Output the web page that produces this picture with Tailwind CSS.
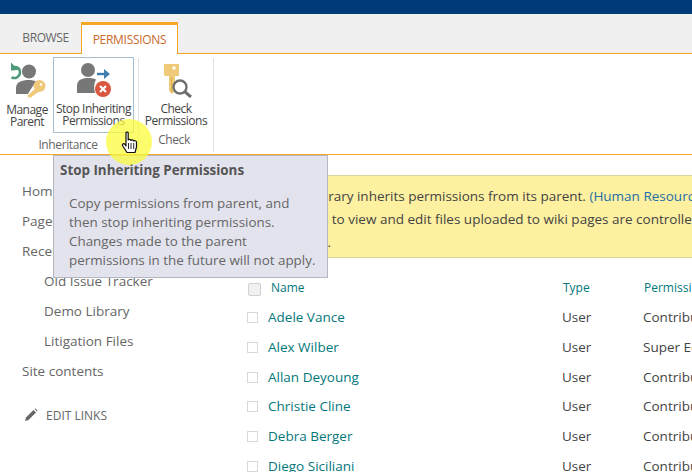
<!DOCTYPE html>
<html lang="en">
<head>
<meta charset="UTF-8">
<title>Permissions</title>
<script src="https://cdn.jsdelivr.net/npm/@tailwindcss/browser@4"></script>
</head>
<body class="w-[692px] h-[472px] overflow-hidden bg-white font-['Open_Sans','Noto_Sans',sans-serif] text-[#444]">
<!-- suite bar -->
<div class="h-[14px] bg-[#003a78]"></div>

<!-- tabs -->
<div class="h-[40px] bg-[#f0f0f0] border-b border-[#f5a623] flex items-end pl-[10px]">
  <div class="w-[71px] h-[31px] flex items-center justify-center text-[12px] tracking-[-0.4px] text-[#666] pt-[1px]">BROWSE</div>
  <div class="w-[97px] h-[32px] -mb-px bg-white border-x border-[#f5a623] border-t-[3px] flex items-center justify-center text-[12px] tracking-[-0.3px] text-[#c9682a]">PERMISSIONS</div>
</div>

<!-- ribbon -->
<div class="h-[101px] border-b border-[#f5a623] flex text-[12px] leading-[12px] tracking-[-0.5px] text-[#444]">
  <div class="w-[139px] border-r border-[#e1e1e1] flex flex-col mt-[4px] mb-[2px]">
    <div class="flex h-[75px] pl-[1px]">
      <div class="w-[52px] flex flex-col items-center">
        <svg width="40" height="38" viewBox="7 62 40 38" class="mt-[3px]">
          <path d="M11 63.500 L11 71.500 L18.500 71 Z" fill="#4f9a78"/>
          <path d="M14 68 C18.500 67.500 20.500 71 20 74 C19.500 78 15.500 80 11.500 78.500" stroke="#4f9a78" stroke-width="2.600" fill="none"/>
          <circle cx="29" cy="72.500" r="7" fill="#777"/>
          <path d="M16 95 L16 89 C16 83 22 81 29 81 C32 81 34 81.500 36 82.500 C33 87 30 91 28 95 Z" fill="#777"/>
          <circle cx="39.500" cy="87" r="6" fill="#efc979"/>
          <path d="M36 89 L27 97 L30 99 L41 91 Z" fill="#efc979"/>
          <circle cx="41" cy="85.500" r="1.300" fill="#fff"/>
        </svg>
        <div class="text-center mt-[5px]">Manage<br>Parent</div>
      </div>
      <div class="w-[81px] h-[76px] -mt-px border border-[#a5bdd1] flex flex-col items-center">
        <svg width="38" height="38" viewBox="75 61 38 38" class="mt-[2px]">
          <circle cx="88" cy="71" r="7" fill="#777"/>
          <path d="M77 94 L77 87 C77 81 82 79 88 79 C91 79 94 79.500 96 80.500 C94 84 93.500 89 95 94 Z" fill="#777"/>
          <path d="M97 75 H105" stroke="#3f7fb0" stroke-width="2.400"/>
          <path d="M104 70 L110 75 L104 80 Z" fill="#3f7fb0"/>
          <circle cx="103" cy="90" r="8" fill="#d9573f"/>
          <path d="M100 87 L106 93 M106 87 L100 93" stroke="#fff" stroke-width="2.200"/>
        </svg>
        <div class="text-center mt-[5px]">Stop Inheriting<br>Permissions</div>
      </div>
    </div>
    <div class="text-center text-[#666] mt-[6px] pr-[2px] tracking-[-0.4px]">Inheritance</div>
  </div>
  <div class="w-[75px] border-r border-[#e1e1e1] flex flex-col items-center mt-[4px] mb-[2px]">
    <svg width="36" height="38" viewBox="160 61 36 38" class="mt-[2px]">
      <path d="M166 65 H181 V77 H177 V92 L174 95 L171 92 V77 H168 C166.500 77 166 76 166 75 Z" fill="#efcb79"/>
      <circle cx="176" cy="69" r="1.700" fill="#fff"/>
      <path d="M173.500 78 V93" stroke="#dfb04a" stroke-width="1.200"/>
      <circle cx="182" cy="88" r="6.500" fill="#fff" fill-opacity="0.75" stroke="#6f6f6f" stroke-width="2.400"/>
      <path d="M186.500 92.500 L193 98" stroke="#6f6f6f" stroke-width="3"/>
    </svg>
    <div class="text-center mt-[5px]">Check<br>Permissions</div>
    <div class="text-[#666] mt-[7px] pr-[4px] tracking-[-0.4px]">Check</div>
  </div>
</div>

<!-- body -->
<div class="flex">
  <nav class="w-[247px] shrink-0 pl-[22px] pt-[27px] text-[13.5px] leading-[18px] text-[#666]">
    <div class="h-[30px]">Home</div>
    <div class="h-[30px]">Pages</div>
    <div class="h-[30px]">Recent</div>
    <div class="pl-[22px]">
      <div class="h-[30px]">Old Issue Tracker</div>
      <div class="h-[30px]">Demo Library</div>
      <div class="h-[30px]">Litigation Files</div>
    </div>
    <div class="h-[30px]">Site contents</div>
    <div class="flex items-center mt-[15px] text-[12px]">
      <svg width="14" height="14" viewBox="0 0 14 14" class="mt-[-3px] ml-[2px] mr-[8px]">
        <path d="M1 13 L2 9.500 L9.500 2 L12 4.500 L4.500 12 Z" fill="#666"/>
        <path d="M10.500 1 L11.500 0.500 L13.500 2.500 L13 3.500 Z" fill="#666"/>
      </svg>
      EDIT LINKS
    </div>
  </nav>

  <main class="flex-1 min-w-0 overflow-hidden">
    <div class="mt-[20px] h-[83px] bg-[#fdf0a0] border-y border-[#d9d79c] pt-[9px] text-[13.5px] leading-[23px] text-[#444] whitespace-nowrap">
      <div class="pl-[37px]">This library inherits permissions from its parent. <span class="text-[#1f6fa8]">(Human Resources)</span></div>
      <div class="pl-[5px]">Permissions to view and edit files uploaded to wiki pages are controlled by</div>
      <div class="pl-[16px]">the library.</div>
    </div>

    <div class="mt-[19px] whitespace-nowrap">
      <div class="flex items-center h-[22px] text-[12px] text-[#03787c]">
        <span class="w-[13px] h-[13px] shrink-0 ml-[1px] mt-[2px] rounded-[2px] border border-[#d0d0d0] bg-[#f1f1f1]"></span>
        <span class="w-[302px] shrink-0 pl-[10px]">Name</span>
        <span class="w-[81px] shrink-0">Type</span>
        <span>Permissions</span>
      </div>
      <div class="flex items-center h-[30px] mt-[3px] text-[13.5px]">
        <span class="w-[11px] h-[11px] shrink-0 border border-[#d9d9d9]"></span>
        <span class="w-[304px] shrink-0 pl-[10px] text-[#03787c]">Adele Vance</span><span class="w-[81px] shrink-0">User</span><span>Contribute</span>
      </div>
      <div class="flex items-center h-[30px] text-[13.5px]">
        <span class="w-[11px] h-[11px] shrink-0 border border-[#d9d9d9]"></span>
        <span class="w-[304px] shrink-0 pl-[10px] text-[#03787c]">Alex Wilber</span><span class="w-[81px] shrink-0">User</span><span>Super Editor</span>
      </div>
      <div class="flex items-center h-[30px] text-[13.5px]">
        <span class="w-[11px] h-[11px] shrink-0 border border-[#d9d9d9]"></span>
        <span class="w-[304px] shrink-0 pl-[10px] text-[#03787c]">Allan Deyoung</span><span class="w-[81px] shrink-0">User</span><span>Contribute</span>
      </div>
      <div class="flex items-center h-[30px] -mt-px text-[13.5px]">
        <span class="w-[11px] h-[11px] shrink-0 border border-[#d9d9d9]"></span>
        <span class="w-[304px] shrink-0 pl-[10px] text-[#03787c]">Christie Cline</span><span class="w-[81px] shrink-0">User</span><span>Contribute</span>
      </div>
      <div class="flex items-center h-[30px] text-[13.5px]">
        <span class="w-[11px] h-[11px] shrink-0 border border-[#d9d9d9]"></span>
        <span class="w-[304px] shrink-0 pl-[10px] text-[#03787c]">Debra Berger</span><span class="w-[81px] shrink-0">User</span><span>Contribute</span>
      </div>
      <div class="flex items-center h-[30px] text-[13.5px]">
        <span class="w-[11px] h-[11px] shrink-0 border border-[#d9d9d9]"></span>
        <span class="w-[304px] shrink-0 pl-[10px] text-[#03787c]">Diego Siciliani</span><span class="w-[81px] shrink-0">User</span><span>Contribute</span>
      </div>
    </div>
  </main>
</div>

<!-- tooltip -->
<div class="absolute left-[53px] top-[155px] w-[275px] h-[123px] bg-[#e3e3ed] border border-[#b6b6c0] z-10">
  <div class="pl-[6px] pt-[5px] text-[13.4px] leading-[18px] font-bold text-[#555]">Stop Inheriting Permissions</div>
  <div class="pl-[15px] pt-[15px] text-[13.4px] leading-[19px] text-[#666] whitespace-nowrap">Copy permissions from parent, and<br>then stop inheriting permissions.<br>Changes made to the parent<br>permissions in the future will not apply.</div>
</div>

<!-- cursor highlight -->
<div class="absolute left-[106px] top-[119px] w-[46px] h-[46px] rounded-full bg-[#fbfb3c]/75 z-20"></div>
<svg class="absolute left-[121px] top-[131px] z-30" width="18" height="23" viewBox="0 0 18 23">
  <path d="M5 2 C5 0.800 7.200 0.800 7.200 2 V9 C7.800 8 9.500 8 10 9.500 C10.500 8.500 12.200 8.500 12.700 10 C13.200 9.500 15 9.500 15.500 11 V16 L14 21.500 H6 L1.500 14.500 C1 13 3 12 4 13.500 L5 15 Z" fill="#fff" stroke="#111" stroke-width="1.200" stroke-linejoin="round"/>
  <path d="M7.500 12 V18 M10 12 V18 M12.700 12 V18" stroke="#111" stroke-width="0.900"/>
</svg>
</body>
</html>
